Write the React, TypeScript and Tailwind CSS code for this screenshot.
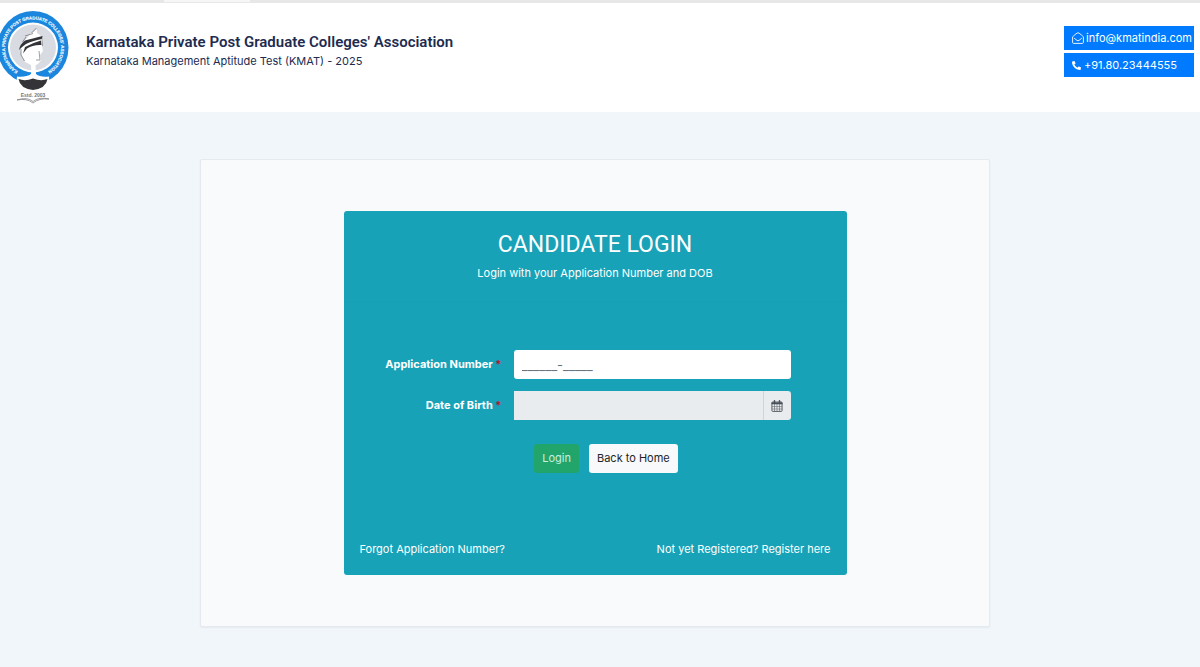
import { useState } from "react";
import { FaPhoneAlt } from "react-icons/fa";

function AssociationLogo() {
  return (
    <svg viewBox="0 0 70 96" className="h-24 w-[70px] shrink-0" role="img" aria-label="Karnataka Private Post Graduate Colleges' Association">
      <defs>
        <path id="ring-text" d="M 19 63.7 A 28 28 0 1 1 47 63.7" />
      </defs>
      <ellipse cx="33" cy="39.5" rx="35.5" ry="36.5" fill="#1b86dd" />
      <circle cx="33" cy="39.5" r="25" fill="#ffffff" />
      <circle cx="33" cy="39.5" r="23" fill="#d9dbe3" />
      <text fill="#f2faff" stroke="#f2faff" strokeWidth="0.15" className="font-['Liberation_Sans_Narrow','Liberation_Sans',sans-serif] text-[4.4px] font-bold">
        <textPath href="#ring-text" startOffset="50%" textAnchor="middle">
          KARNATAKA PRIVATE POST GRADUATE COLLEGES&apos; ASSOCIATION
        </textPath>
      </text>
      <path d="M36.5 20 L34.5 23.5 L31 25 L28 29 L22 35 L20 42 L22 49 L25 54 L31 57 L32 64 L35 64 L35 58 L39 55 L41 52 L40 47 L43 43 L42 38 L43 31 L40 27 L37 25 Z" fill="#ffffff" />
      <path d="M36.5 20 L31.5 25 M33 25.5 L25 28 M26 29 L22.5 34 M21 41 L21 47 L24.5 53" stroke="#77787d" strokeWidth="0.8" fill="none" />
      <path d="M19 42 Q20 36 25 32.5 Q32 30.5 42.5 28 L42 31 Q32 33 26 36 Q23 38 19 42 Z" fill="#333438" />
      <path d="M25 39 Q32 35 41 32.5 L41.5 37 Q33 36.5 27 40.5 L23 45.5 Z" fill="#333438" />
      <path d="M42 30 L42.5 38 M39 43 L40 52 L36 52" stroke="#85868b" strokeWidth="0.8" fill="none" />
      <path d="M31.5 58 L31 66 Q26 69.5 17 68.5 L16 80 H50 L49 68.5 Q40 69.5 36 66 L35.5 58 Z" fill="#ffffff" />
      <path d="M18.5 71 Q25 73.5 33 70.5 Q41 73.5 47.5 71 Q46 80.5 33 82 Q20 80.5 18.5 71 Z" fill="#343337" />
      <text x="33" y="88.5" textAnchor="middle" fill="#777777" xmlSpace="preserve" className="font-['Liberation_Sans',sans-serif] text-[5px] font-bold">Estd. 2003</text>
      <path d="M17 92 Q27 88.5 33 93.5 Q39 88.5 49 91 M17 92 Q27 90 33 95 Q39 90 49 91" fill="none" stroke="#77777b" strokeWidth="0.7" />
    </svg>
  );
}

function OpenEnvelope() {
  return (
    <svg viewBox="0 0 12 12" className="size-3 shrink-0" fill="none" stroke="currentColor" strokeWidth="0.9" strokeLinejoin="round" aria-hidden="true">
      <path d="M.6 4.8 Q3 2.5 5 1.1 Q6 .4 7 1.1 Q9 2.5 11.4 4.8 V10.4 Q11.4 11.4 10.4 11.4 H1.6 Q.6 11.4 .6 10.4 Z" />
      <path d="M2.2 6.2 L5 8.4 Q6 9.1 7 8.4 L9.8 6.2" />
    </svg>
  );
}

function CalendarGlyph() {
  return (
    <svg viewBox="0 0 12 12" className="size-3" fill="none" stroke="currentColor" aria-hidden="true">
      <rect x=".9" y="2" width="10.2" height="9.4" rx=".8" strokeWidth="0.9" />
      <path d="M.9 2.7 H11.1 V4 H.9 Z" fill="currentColor" strokeWidth="0.6" />
      <path d="M3.5 4 V11.2 M6 4 V11.2 M8.5 4 V11.2 M1 6.6 H11 M1 9 H11" strokeWidth="0.5" />
      <path d="M3.5 .8 V2.8 M8.5 .8 V2.8" strokeWidth="1.5" strokeLinecap="round" />
    </svg>
  );
}

export default function App() {
  const [applicationNumber, setApplicationNumber] = useState("______-_____");

  return (
    <div className="min-h-screen bg-[#f0f6fa] font-[Inter,sans-serif] text-[11px] text-[#212b50]">
      <div className="flex h-[3px] bg-[#e7e7e7]">
        <div className="ml-[164px] h-0.5 w-[86px] bg-[#f6f6f6]" />
      </div>

      <header className="flex items-start justify-between bg-white pt-[5px] pr-1.5 pb-2">
        <div className="flex gap-4">
          <AssociationLogo />
          <div className="pt-6">
            <h1 className="font-[Roboto,sans-serif] text-[15px] leading-5 font-semibold">Karnataka Private Post Graduate Colleges&apos; Association</h1>
            <p className="leading-[18px]">Karnataka Management Aptitude Test (KMAT) - 2025</p>
          </div>
        </div>
        <address className="mt-[18px] flex flex-col gap-[3px] text-white not-italic">
          <a href="mailto:info@kmatindia.com" className="flex h-6 items-center gap-0.5 bg-[#007bff] pr-0.5 pl-2">
            <OpenEnvelope />
            info@kmatindia.com
          </a>
          <a href="tel:+918023444555" className="flex h-6 items-center gap-[3px] bg-[#007bff] pr-0.5 pl-2">
            <FaPhoneAlt className="size-[9px]" aria-hidden="true" />
            +91.80.23444555
          </a>
        </address>
      </header>

      <main className="pt-[47px] pr-2.5 pb-10">
        <div className="mx-auto max-w-[790px] rounded-xs border border-[#e6eaee] bg-[#f8fafc] px-4 py-[51px] shadow-xs">
          <section className="mx-auto max-w-[503px] rounded-[3px] bg-[#17a2b8] text-white">
            <div className="border-b border-[#169fb5] pt-[19px] pb-[19px] text-center">
              <h2 className="font-[Roboto,sans-serif] text-[23px] leading-[30px]">CANDIDATE LOGIN</h2>
              <p className="mt-1 leading-[18px]">Login with your Application Number and DOB</p>
            </div>

            <form onSubmit={(e) => e.preventDefault()} className="px-4 pt-12 pb-[17px]">
              <div className="grid grid-cols-[142px_1fr] gap-x-3 gap-y-3 pr-10">
                <label htmlFor="application" className="self-center text-right font-bold">
                  Application Number <span className="text-[#b5182a]">*</span>
                </label>
                <input
                  id="application"
                  value={applicationNumber}
                  onChange={(e) => setApplicationNumber(e.target.value)}
                  className="h-[29px] w-full min-w-0 rounded-[3px] bg-white px-2 text-[13px] text-[#6c757d] outline-none"
                />
                <label htmlFor="dob" className="self-center text-right font-bold">
                  Date of Birth <span className="text-[#b5182a]">*</span>
                </label>
                <div className="flex h-[29px]">
                  <input id="dob" readOnly className="min-w-0 flex-1 bg-[#e9ecef] px-2 text-[#495057] outline-none" />
                  <button type="button" aria-label="Choose date" className="flex w-7 items-center justify-center rounded-r-[3px] border-l border-[#ced4da] bg-[#e9ecef] text-[#495057]">
                    <CalendarGlyph />
                  </button>
                </div>
              </div>

              <div className="mt-6 flex justify-center gap-2.5 pl-[22px]">
                <button type="submit" className="h-[29px] rounded-[3px] bg-[#22a56b] px-2 text-[#c9f0dd]">Login</button>
                <button type="button" className="h-[29px] rounded-[3px] bg-[#f8f9fa] px-2 text-[#212529]">Back to Home</button>
              </div>

              <div className="mt-[67px] flex justify-between leading-[18px]">
                <a href="#forgot">Forgot Application Number?</a>
                <a href="#register">Not yet Registered? Register here</a>
              </div>
            </form>
          </section>
        </div>
      </main>
    </div>
  );
}
